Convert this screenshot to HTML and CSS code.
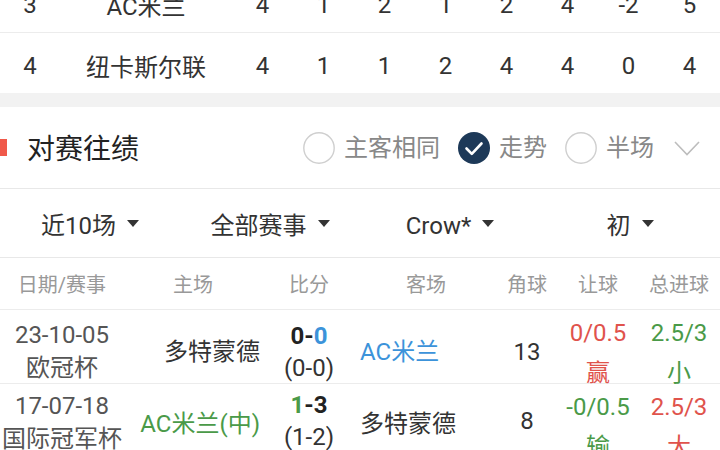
FILE: index.html
```html
<!DOCTYPE html>
<html lang="zh">
<head>
<meta charset="utf-8">
<link rel="stylesheet" href="styles.css">
</head>
<body>
<div class="page">
  <div class="standings">
    <div class="srow first">
      <div>3</div><div>AC米兰</div><div>4</div><div>1</div><div>2</div><div>1</div><div>2</div><div>4</div><div>-2</div><div>5</div>
    </div>
    <div class="srow">
      <div>4</div><div>纽卡斯尔联</div><div>4</div><div>1</div><div>1</div><div>2</div><div>4</div><div>4</div><div>0</div><div>4</div>
    </div>
  </div>
  <div class="gap"></div>
  <div class="section-head">
    <div class="title-wrap"><span class="marker"></span><span class="title">对赛往绩</span></div>
    <div class="options">
      <span class="opt"><svg class="radio" viewBox="0 0 32 32"><circle cx="16" cy="16" r="15.2" fill="none" stroke="#cfcfcf" stroke-width="1.4"/></svg><span>主客相同</span></span>
      <span class="opt"><svg class="radio" viewBox="0 0 32 32"><circle cx="16" cy="16" r="16" fill="#1d3958"/><path d="M8.5 16.5 L13.8 21.8 L23.5 11.5" fill="none" stroke="#fff" stroke-width="2.6" stroke-linecap="round" stroke-linejoin="round"/></svg><span>走势</span></span>
      <span class="opt"><svg class="radio" viewBox="0 0 32 32"><circle cx="16" cy="16" r="15.2" fill="none" stroke="#cfcfcf" stroke-width="1.4"/></svg><span>半场</span></span>
      <svg class="chev" viewBox="0 0 26 15"><polyline points="1,1 13,13.5 25,1" fill="none" stroke="#bdbdbd" stroke-width="1.6"/></svg>
    </div>
  </div>
  <div class="filters">
    <div class="filter">近10场<span class="tri"></span></div>
    <div class="filter">全部赛事<span class="tri"></span></div>
    <div class="filter latin">Crow*<span class="tri"></span></div>
    <div class="filter">初<span class="tri"></span></div>
  </div>
  <div class="mhead">
    <div>日期/赛事</div><div>主场</div><div>比分</div><div>客场</div><div>角球</div><div>让球</div><div>总进球</div>
  </div>
  <div class="mrow">
    <div class="cell date"><span>23-10-05</span><span>欧冠杯</span></div>
    <div class="cell home">多特蒙德</div>
    <div class="cell score"><span class="b">0-<span class="blue">0</span></span><span>(0-0)</span></div>
    <div class="cell away blue">AC米兰</div>
    <div class="cell">13</div>
    <div class="cell odds red"><span>0/0.5</span><span>赢</span></div>
    <div class="cell odds green"><span>2.5/3</span><span>小</span></div>
  </div>
  <div class="mrow">
    <div class="cell date"><span>17-07-18</span><span>国际冠军杯</span></div>
    <div class="cell home green">AC米兰(中)</div>
    <div class="cell score"><span class="b"><span class="green">1</span>-3</span><span>(1-2)</span></div>
    <div class="cell away">多特蒙德</div>
    <div class="cell">8</div>
    <div class="cell odds green"><span>-0/0.5</span><span>输</span></div>
    <div class="cell odds red"><span>2.5/3</span><span>大</span></div>
  </div>
</div>
</body>
</html>
```
FILE: styles.css
```css
* { box-sizing: border-box; }
html, body { margin: 0; padding: 0; }
body {
  width: 720px;
  height: 450px;
  overflow: hidden;
  background: #fff;
  font-family: "Roboto", "Noto Sans CJK SC", sans-serif;
  color: #333;
}
.page { width: 720px; }

.standings { margin-top: -28px; }
.srow {
  display: grid;
  grid-template-columns: 60px 172px repeat(8, 61px);
  height: 61px;
  padding-top: 5px;
  align-items: center;
  font-size: 24px;
  text-align: center;
  color: #333;
}
.srow.first { border-bottom: 1px solid #ececec; }
.srow + .srow { height: 60px; }

.gap { height: 14px; background: #f2f2f2; }

.section-head {
  height: 82px;
  display: flex;
  align-items: center;
  justify-content: space-between;
  border-bottom: 1px solid #e8e8e8;
}
.title-wrap { display: flex; align-items: center; }
.marker { width: 7px; height: 17px; background: #f0594a; margin-right: 20px; }
.title { font-size: 28px; color: #222; line-height: 1; padding-top: 5px; }
.options { display: flex; align-items: center; padding-right: 20px; padding-top: 1px; }
.opt { display: flex; align-items: center; font-size: 24px; color: #888; margin-right: 18px; }
.opt span { line-height: 1; }
.radio { width: 32px; height: 32px; margin-right: 9px; }
.chev { width: 26px; height: 15px; margin-left: 2px; }

.filters {
  height: 69px;
  display: grid;
  grid-template-columns: repeat(4, 180px);
  align-items: center;
  border-bottom: 1px solid #e8e8e8;
}
.filter {
  display: flex;
  justify-content: center;
  align-items: center;
  font-size: 24px;
  color: #333;
}
.filter.latin { padding-top: 6px; }
.filter.latin .tri { margin-top: -5px; }
.tri {
  width: 0; height: 0;
  border-left: 6px solid transparent;
  border-right: 6px solid transparent;
  border-top: 7px solid #333;
  margin-left: 11px;
}

.mhead, .mrow {
  display: grid;
  grid-template-columns: 124px 138px 94px 140px 62px 80px 82px;
}
.mhead {
  height: 52px;
  align-items: center;
  text-align: center;
  font-size: 20px;
  color: #999;
  border-bottom: 1px solid #ececec;
}
.mrow { height: 74px; border-bottom: 1px solid #ececec; font-size: 24px; }
.mrow + .mrow { height: 80px; border-bottom: none; }
.cell {
  display: flex;
  flex-direction: column;
  justify-content: center;
  align-items: center;
  white-space: nowrap;
  color: #333;
}
.mrow + .mrow .cell { height: 74px; }
.date { color: #555; line-height: 33px; }
.mrow + .mrow .date { padding-top: 3px; }
.home, .away { padding-bottom: 4px; }
.home { align-items: flex-end; padding-right: 2px; }
.away { align-items: flex-start; padding-left: 4px; }
.mrow + .mrow .home, .mrow + .mrow .away { padding-bottom: 0; }
.score { line-height: 32px; }
.b { font-weight: bold; color: #222; }
.odds { justify-content: flex-start; padding-top: 3px; line-height: 40px; }
.blue { color: #3c93da; }
.green { color: #4a9a48; }
.red { color: #e0534c; }
.cell.blue { color: #3c93da; }
.cell.green { color: #4a9a48; }
.cell.red { color: #e0534c; }
```
